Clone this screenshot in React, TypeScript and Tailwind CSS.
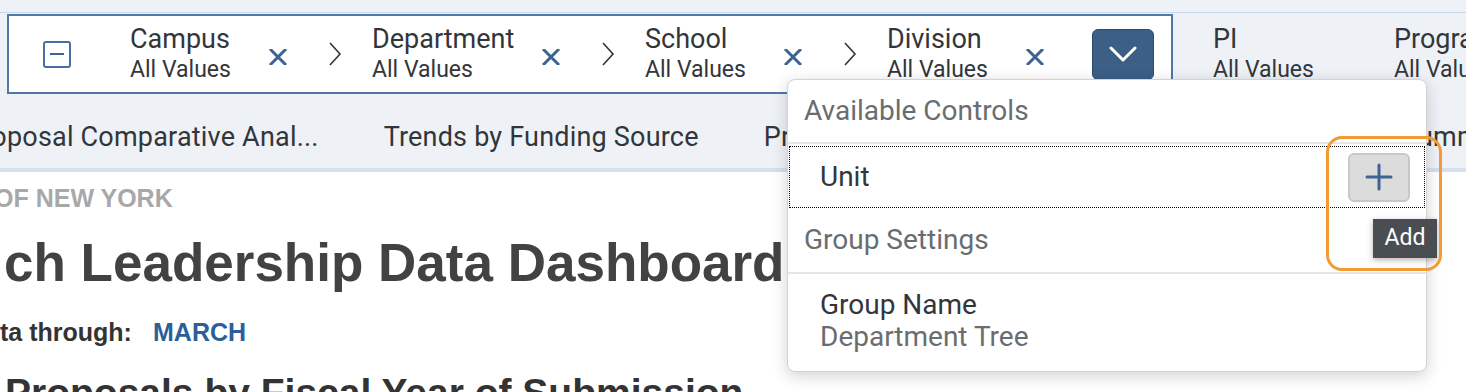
import type { ReactNode } from 'react';

const filters = [
  { label: 'Campus', width: 'w-[139px]' },
  { label: 'Department', width: 'w-[170px]' },
  { label: 'School', width: 'w-[139px]' },
  { label: 'Division', width: 'w-[139px]' },
];

function ValueLabel({ label }: { label: string }) {
  return (
    <div className="text-[#32363a]">
      <div className="text-[27px] leading-[32px] whitespace-nowrap">{label}</div>
      <div className="text-[23px] leading-[30px] whitespace-nowrap">All Values</div>
    </div>
  );
}

function ClearIcon() {
  return (
    <svg width="18" height="16" viewBox="0 0 18 16" className="mt-[5px] shrink-0">
      <path d="M2 1 L16 15 M16 1 L2 15" stroke="#3b6493" strokeWidth="3" strokeLinecap="square" />
    </svg>
  );
}

function ChevronRight() {
  return (
    <svg width="14" height="24" viewBox="0 0 14 24" className="ml-[41px] mr-[30px] shrink-0">
      <path d="M2 1 L12 12 L2 23" fill="none" stroke="#333" strokeWidth="1.6" />
    </svg>
  );
}

function Section({ children, h }: { children: ReactNode; h: string }) {
  return <div className={`flex items-center pl-[16px] text-[28px] text-[#6a6d70] ${h}`}>{children}</div>;
}

export default function App() {
  return (
    <div className="relative h-[392px] w-[1466px] overflow-hidden bg-white font-['Roboto',sans-serif]">
      {/* filter bar */}
      <div className="bg-[#eef2f7]">
        <div className="h-[12px]" />
        <div className="flex items-center border-t border-[#cad8e9] pt-px">
          <div className="ml-[7px] flex h-[80px] w-[1166px] shrink-0 items-center border-2 border-[#4d78a7] bg-white pl-[34px]">
            <div className="flex h-[27px] w-[28px] shrink-0 items-center justify-center rounded-[3px] border-2 border-[#46709e]">
              <div className="h-[2px] w-[14px] bg-[#3e6591]" />
            </div>
            <div className="ml-[59px] flex items-center">
              {filters.map((f, i) => (
                <div key={f.label} className="flex items-center">
                  <div className={f.width}>
                    <ValueLabel label={f.label} />
                  </div>
                  <ClearIcon />
                  {i < filters.length - 1 && <ChevronRight />}
                </div>
              ))}
            </div>
            <button
              type="button"
              className="ml-[48px] flex h-[51px] w-[62px] shrink-0 items-center justify-center rounded-[6px] border border-[#2d4a6b] bg-[#3c5f86]"
            >
              <svg width="28" height="16" viewBox="0 0 28 16">
                <path d="M2 2 L14 14 L26 2" fill="none" stroke="#fff" strokeWidth="3" strokeLinecap="round" strokeLinejoin="round" />
              </svg>
            </button>
          </div>
          <div className="ml-[40px] w-[181px] shrink-0">
            <ValueLabel label="PI" />
          </div>
          <div className="shrink-0">
            <ValueLabel label="Program" />
          </div>
        </div>

        {/* tabs */}
        <div className="flex h-[78px] gap-[65px] overflow-hidden border-b-4 border-[#d5e0ed] pt-[27px] text-[27px] leading-[32px] tracking-[0.2px] text-[#32363a] whitespace-nowrap">
          <span className="-ml-[35px] shrink-0">Proposal Comparative Anal...</span>
          <span className="shrink-0">Trends by Funding Source</span>
          <span className="w-[573px] shrink-0">Proposals by Sponsor Type</span>
          <span className="shrink-0">Summary</span>
        </div>
      </div>

      {/* dashboard content */}
      <div className="pt-[14px] font-['Liberation_Sans',Arial,sans-serif] font-bold whitespace-nowrap">
        <div className="-ml-[6px] text-[25px] leading-[25px] text-[#a8a8a8]">OF NEW YORK</div>
        <div className="mt-[25px] pl-[4px] text-[53px] leading-[54px] text-[#424242]">ch Leadership Data Dashboard</div>
        <div className="mt-[30px] flex text-[25px] leading-[25px] text-[#333]">
          <span className="w-[153px]">ta through:</span>
          <span className="text-[#2c5f99]">MARCH</span>
        </div>
        <div className="mt-[28px] pl-[5px] text-[39px] leading-[39px] text-[#333]">Proposals by Fiscal Year of Submission</div>
      </div>

      {/* available controls popover */}
      <div className="absolute left-[787px] top-[79px] h-[293px] w-[640px] rounded-[8px] border border-[#d3d3d3] bg-white shadow-[0_4px_16px_rgba(0,0,0,0.18)]">
        <Section h="h-[62px]">Available Controls</Section>
        <div className="h-[2px] bg-[#e5e5e5]" />
        <div className="mx-px mt-[2px] flex h-[62px] items-center justify-between border border-dotted border-black pl-[30px] pr-[14px]">
          <span className="text-[28px] text-[#32363a]">Unit</span>
          <button
            type="button"
            className="flex h-[49px] w-[62px] items-center justify-center rounded-[6px] border-2 border-[#c8c8c8] bg-[#dcdcdc]"
          >
            <svg width="28" height="28" viewBox="0 0 28 28">
              <path d="M14 2 V26 M2 14 H26" stroke="#3e6591" strokeWidth="3" strokeLinecap="round" />
            </svg>
          </button>
        </div>
        <Section h="h-[64px]">Group Settings</Section>
        <div className="h-[2px] bg-[#e5e5e5]" />
        <div className="pl-[32px] pt-[15px] text-[28px] leading-[32px]">
          <div className="text-[#32363a]">Group Name</div>
          <div className="text-[#6a6d70]">Department Tree</div>
        </div>
      </div>

      {/* tooltip */}
      <div className="absolute left-[1373px] top-[219px] flex h-[39px] w-[64px] items-center justify-center bg-[#4a4e53] text-[23px] text-white shadow-[0_2px_6px_rgba(0,0,0,0.3)]">
        Add
      </div>

      {/* highlight */}
      <div className="absolute left-[1326px] top-[136px] h-[135px] w-[116px] rounded-[16px] border-[3px] border-[#f29a33]" />
    </div>
  );
}
